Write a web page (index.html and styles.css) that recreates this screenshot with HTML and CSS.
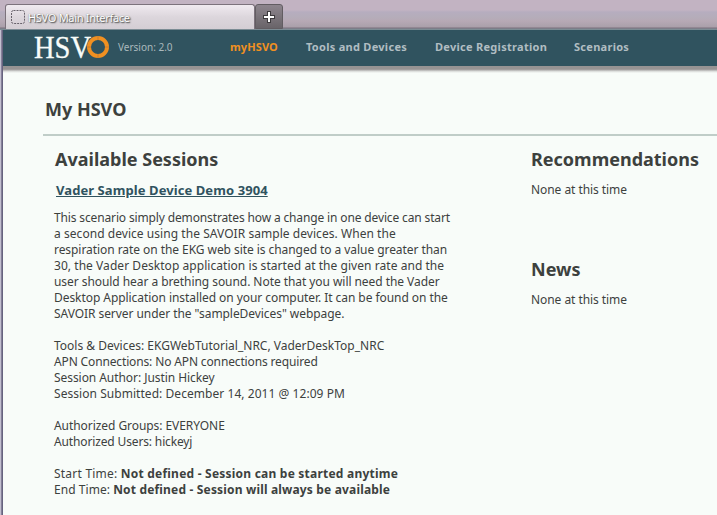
FILE: index.html
```html
<!DOCTYPE html>
<html lang="en">
<head>
<meta charset="utf-8">
<title>HSVO Main Interface</title>
<link rel="stylesheet" href="styles.css">
</head>
<body>
<div class="window">
  <div class="tabs">
    <div class="tab">
      <svg class="favicon" width="14" height="14" viewBox="0 0 14 14"><rect x=".5" y=".5" width="13" height="13" rx="2" fill="none" stroke="#67616a" stroke-dasharray="2 1"/></svg>
      <span class="tab-title">HSVO Main Interface</span>
    </div>
    <div class="new-tab"><svg width="12" height="12" viewBox="0 0 12 12"><path d="M4 0h4v4h4v4H8v4H4V8H0V4h4z" fill="#3c393c"/><path d="M5 1h2v4h4v2H7v4H5V7H1V5h4z" fill="#fff"/></svg></div>
  </div>
  <header class="bar">
    <svg class="logo" width="76" height="36" viewBox="0 0 76 36">
      <text class="logo-text" x="0" y="28" textLength="57" lengthAdjust="spacingAndGlyphs">HSV</text>
      <circle cx="64" cy="17" r="9" fill="none" stroke="#f19021" stroke-width="4"/>
      <path d="M64 6v4M64 24v4M53 17h4M71 17h4" stroke="#c47c35" stroke-width="1"/>
    </svg>
    <span class="version">Version: 2.0</span>
    <nav class="nav">
      <a class="active">myHSVO</a><a class="tools">Tools and Devices</a><a class="reg">Device Registration</a><a class="scen">Scenarios</a>
    </nav>
  </header>
  <div class="bar-shadow"></div>
  <main class="page">
    <h1>My HSVO</h1>
    <div class="columns">
      <section class="sessions">
        <h2 class="h-sessions">Available Sessions</h2>
        <a class="session-link">Vader Sample Device Demo 3904</a>
        <p class="text"><span class="tighter">This scenario simply demonstrates how a change in one device can start</span><br><span class="wide">a second device using the SAVOIR sample devices. When the</span><br><span class="tight">respiration rate on the EKG web site is changed to a value greater than</span><br><span class="wide">30, the Vader Desktop application is started at the given rate and the</span><br><span class="tight">user should hear a brething sound. Note that you will need the Vader</span><br><span class="tight">Desktop Application installed on your computer. It can be found on the</span><br><span class="tight">SAVOIR server under the "sampleDevices" webpage.</span></p>
        <p class="text">Tools &amp; Devices: EKGWebTutorial_NRC, VaderDeskTop_NRC<br><span class="tighter">APN Connections: No APN connections required</span><br><span class="tight">Session Author: Justin Hickey</span><br><span class="wide">Session Submitted: December 14, 2011 @ 12:09 PM</span></p>
        <p class="text"><span class="tight">Authorized Groups: EVERYONE</span><br><span class="tighter">Authorized Users: hickeyj</span></p>
        <p class="text"><span class="wider">Start Time: <b>Not defined - Session can be started anytime</b></span><br><span class="wide">End Time: <b class="end">Not defined - Session will always be available</b></span></p>
      </section>
      <aside class="side">
        <section class="block"><h2 class="h-rec">Recommendations</h2><p class="text">None at this time</p></section>
        <section class="block"><h2 class="h-news">News</h2><p class="text">None at this time</p></section>
      </aside>
    </div>
  </main>
</div>
</body>
</html>
```
FILE: styles.css
```css
* { box-sizing: border-box; }
body { margin: 0; background: #f8fcf9; color: #3d413e; font: 12px/16px "Noto Sans", "Open Sans", sans-serif; overflow: hidden; }
.window { height: 515px; border-left: 1px solid #c3bfd0; box-shadow: inset 1px 0 #858199, inset 2px 0 #66637f; padding-left: 2px; }
.tabs { height: 30px; margin-left: -3px; padding: 4px 0 0 5px; display: flex; background: linear-gradient(#c2b3c2 0 10px, #b6adbf 12px, #b5adba 17px, #b7a9b5 21px, #aaa0aa 27px, #7c6e7c 28px, #7b8c94 29px); }
.tab { width: 250px; height: 25px; border: 1px solid #7c727c; border-bottom: 0; border-radius: 3px 3px 0 0; background: linear-gradient(#f0eaf0, #dcd6dc 50%, #d4ced4); display: flex; align-items: center; padding-left: 5px; }
.favicon { margin-right: 3px; }
.tab-title { margin-top: 2px; color: #fff; font-size: 11px; text-shadow: 1px 1px 1px #666, 0 0 1px #777, 1px 1px 2px #888; letter-spacing: -.3px; }
.new-tab { width: 28px; height: 25px; border: 1px solid #625d62; border-radius: 3px 3px 0 0; background: linear-gradient(#8d858d, #696469); display: flex; align-items: center; justify-content: center; }
.bar { height: 36px; background: #30535f; display: flex; align-items: center; padding-left: 31px; }
.logo { flex: none; }
.logo-text { font: 32px/32px "Liberation Serif", serif; fill: #f8fcf9; stroke: #f8fcf9; stroke-width: .3px; }
.version { width: 112px; margin: -3px 0 0 8px; font-size: 10px; color: #aab9bd; letter-spacing: 0; white-space: nowrap; }
.nav { display: flex; margin-top: -2px; font-weight: bold; font-size: 11px; color: #b0bdc2; white-space: nowrap; }
.active { width: 76px; color: #f19021; letter-spacing: .1px; }
.tools { width: 129px; letter-spacing: .28px; }
.reg { width: 139px; letter-spacing: .28px; }
.scen { letter-spacing: .28px; }
.bar-shadow { height: 7px; background: linear-gradient(#969393 0 3px, #aaa8a8 4px, #d5d7d5 5px, #f8fcf9); }
.page { padding-left: 40px; }
h1, h2 { margin: 0; font-size: 18px; line-height: 24px; }
h1 { height: 63px; padding: 24px 0 0 2px; border-bottom: 2px solid #c0cdc8; }
.columns { display: flex; padding-top: 11px; }
.sessions { flex: none; width: 487px; padding-left: 11px; white-space: nowrap; }
.h-sessions { padding-left: 1px; }
.session-link { display: block; margin: 11px 0 12px 2px; font-weight: bold; font-size: 13px; color: #30535f; text-decoration: underline; letter-spacing: .08px; }
.text { margin: 0 0 16px; }
.tight { letter-spacing: -.06px; }
.tighter { letter-spacing: -.14px; }
.wide { letter-spacing: .05px; }
.wider { letter-spacing: .22px; }
.end { letter-spacing: .17px; }
.side { padding-left: 1px; white-space: nowrap; }
.block { height: 110px; }
.block .text { margin-top: 11px; letter-spacing: -.06px; }
```
